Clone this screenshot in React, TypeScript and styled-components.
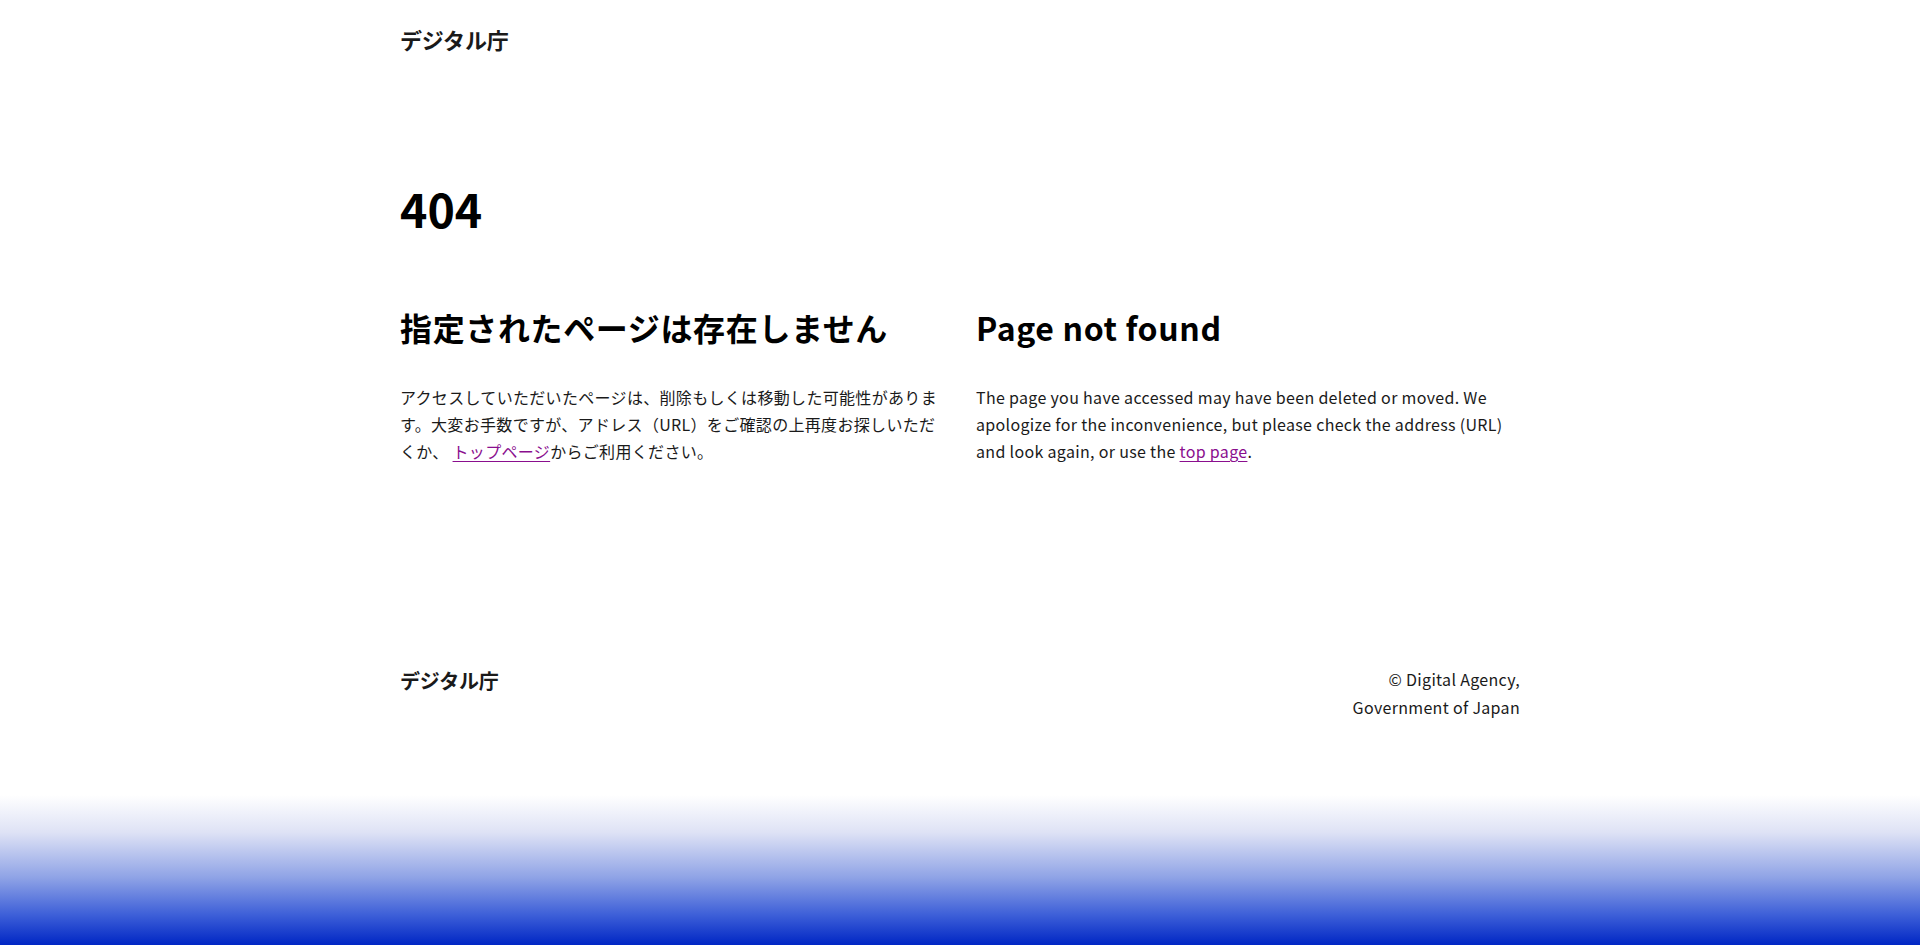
import React from "react";
import styled, { createGlobalStyle } from "styled-components";

const GlobalStyle = createGlobalStyle`
  html, body {
    margin: 0;
    padding: 0;
    background: #ffffff;
  }
  body {
    font-family: "Noto Sans CJK JP", "Noto Sans", sans-serif;
    color: #1a1a1a;
  }
  * { box-sizing: border-box; }
`;

const Page = styled.div`
  min-height: 945px;
  display: flex;
  flex-direction: column;
`;

const Container = styled.div`
  width: 1120px;
  margin: 0 auto;
`;

const Header = styled.header`
  padding-top: 23px;
`;

const Logo = styled.div<{ $size: number }>`
  font-size: ${(p) => p.$size}px;
  line-height: 1.5;
  font-weight: 700;
  color: #1a1a1a;
  letter-spacing: -0.01em;
`;

const Main = styled.main`
  padding-top: 118px;
`;

const ErrorCode = styled.h1`
  margin: 0;
  font-size: 46.5px;
  line-height: 1.45;
  font-weight: 700;
  color: #000;
`;

const Columns = styled.div`
  display: grid;
  grid-template-columns: 1fr 1fr;
  column-gap: 32px;
  margin-top: 63px;
`;

const Column = styled.section`
  display: flex;
  flex-direction: column;
  gap: 33px;
`;

const Heading = styled.h2`
  margin: 0;
  font-size: 32px;
  line-height: 1.45;
  font-weight: 700;
  color: #000;
  letter-spacing: 0.02em;
`;

const Body = styled.p`
  margin: 0;
  font-size: 16px;
  line-height: 1.7;
  letter-spacing: 0.02em;
  color: #1a1a1a;
`;

const TextLink = styled.a`
  color: #8a0e8e;
  text-decoration: underline;
  text-underline-offset: 3px;
`;

const Footer = styled.footer`
  padding-top: 201px;
  padding-bottom: 74px;
`;

const FooterRow = styled.div`
  display: flex;
  justify-content: space-between;
  align-items: flex-start;
`;

const Copyright = styled.p`
  margin: 0;
  font-size: 16px;
  line-height: 1.7;
  letter-spacing: 0.02em;
  text-align: right;
  color: #1a1a1a;
`;

const Gradient = styled.div`
  margin-top: auto;
  height: 150px;
  background: linear-gradient(to bottom, rgba(255, 255, 255, 1) 0%, rgba(222, 226, 245, 1) 25%, #8fa3e6 55%, #3d5fd8 80%, #0026c4 100%);
`;

export default function App() {
  return (
    <>
      <GlobalStyle />
      <Page>
        <Header>
          <Container>
            <Logo $size={22}>デジタル庁</Logo>
          </Container>
        </Header>
        <Main>
          <Container>
            <ErrorCode>404</ErrorCode>
            <Columns>
              <Column lang="ja">
                <Heading>指定されたページは存在しません</Heading>
                <Body>
                  アクセスしていただいたページは、削除もしくは移動した可能性があります。大変お手数ですが、アドレス（URL）をご確認の上再度お探しいただくか、{" "}
                  <TextLink href="#">トップページ</TextLink>からご利用ください。
                </Body>
              </Column>
              <Column lang="en">
                <Heading>Page not found</Heading>
                <Body>
                  The page you have accessed may have been deleted or moved. We apologize for the inconvenience, but please check the address (URL) and look again, or use the{" "}
                  <TextLink href="#">top page</TextLink>.
                </Body>
              </Column>
            </Columns>
          </Container>
        </Main>
        <Footer>
          <Container>
            <FooterRow>
              <Logo $size={20}>デジタル庁</Logo>
              <Copyright>
                © Digital Agency,
                <br />
                Government of Japan
              </Copyright>
            </FooterRow>
          </Container>
        </Footer>
        <Gradient />
      </Page>
    </>
  );
}
